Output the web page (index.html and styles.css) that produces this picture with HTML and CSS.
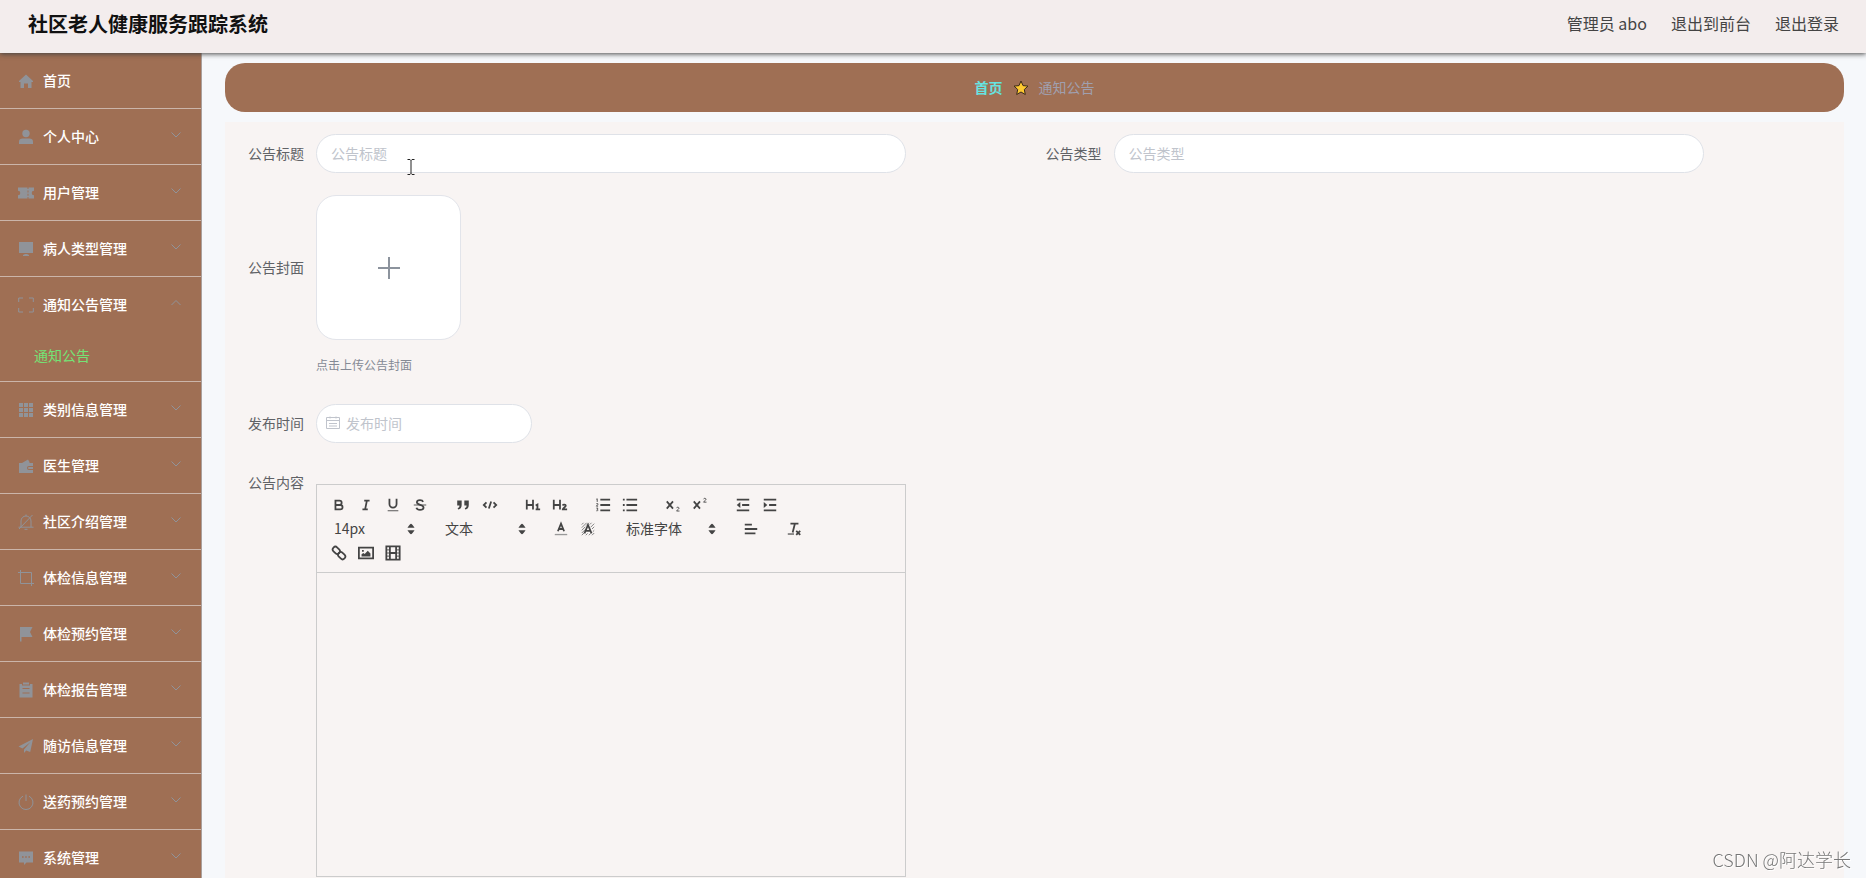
FILE: index.html
```html
<!DOCTYPE html>
<html lang="zh-CN">
<head>
  <meta charset="UTF-8">
  <meta name="viewport" content="width=device-width, initial-scale=1.0">
  <title>社区老人健康服务跟踪系统</title>
  <link rel="stylesheet" href="styles.css">
</head>
<body>
  <header class="navbar">
    <h1>社区老人健康服务跟踪系统</h1>
    <nav class="user-menu">
      <span>管理员 abo</span>
      <a href="#">退出到前台</a>
      <a href="#">退出登录</a>
    </nav>
  </header>

  <div class="layout">
    <aside class="sidebar">
      <ul class="menu">
        <li><a href="#">
          <svg class="icon" viewBox="0 0 16 16"><path d="M8 1.5 1 8v1h1.5v6H6v-4.5h4V15h3.5V9H15V8z"/></svg>
          <span>首页</span></a></li>
        <li><a href="#">
          <svg class="icon" viewBox="0 0 16 16"><circle cx="8" cy="4.5" r="3.7"/><path d="M1 15v-2.5c0-2 1.5-3 3.5-3h7c2 0 3.5 1 3.5 3V15z"/></svg>
          <span>个人中心</span>
          <svg class="arrow" viewBox="0 0 12 12"><path d="M1.5 3.5 6 8l4.5-4.5"/></svg></a></li>
        <li><a href="#">
          <svg class="icon" viewBox="0 0 16 16"><path d="M0 2.5h9.5V4h1V2.5H16v3.2a2.3 2.3 0 0 0 0 4.6v3.2h-5.5V12h-1v1.5H0v-3.2a2.3 2.3 0 0 0 0-4.6zM9.5 5.5v2h1v-2zm0 3.2v2h1v-2z" fill-rule="evenodd"/></svg>
          <span>用户管理</span>
          <svg class="arrow" viewBox="0 0 12 12"><path d="M1.5 3.5 6 8l4.5-4.5"/></svg></a></li>
        <li><a href="#">
          <svg class="icon" viewBox="0 0 16 16"><path d="M1 1h14v11H1zM5 14l2-1h2l2 1v1H5z"/></svg>
          <span>病人类型管理</span>
          <svg class="arrow" viewBox="0 0 12 12"><path d="M1.5 3.5 6 8l4.5-4.5"/></svg></a></li>
        <li class="open"><a href="#">
          <svg class="icon line" viewBox="0 0 16 16"><path d="M.7 5V1H5M11 1h4.300v4M15.300 11v4H11M5 15H.7v-4"/></svg>
          <span>通知公告管理</span>
          <svg class="arrow" viewBox="0 0 12 12"><path d="M1.5 8 6 3.5 10.5 8"/></svg></a>
          <ul class="submenu">
            <li><a href="#">通知公告</a></li>
          </ul>
        </li>
        <li><a href="#">
          <svg class="icon" viewBox="0 0 16 16"><path d="M1 1h4v4H1zM6 1h4v4H6zM11 1h4v4h-4zM1 6h4v4H1zM6 6h4v4H6zM11 6h4v4h-4zM1 11h4v4H1zM6 11h4v4H6zM11 11h4v4h-4z"/></svg>
          <span>类别信息管理</span>
          <svg class="arrow" viewBox="0 0 12 12"><path d="M1.5 3.5 6 8l4.5-4.5"/></svg></a></li>
        <li><a href="#">
          <svg class="icon" viewBox="0 0 16 16"><path d="M1 5h3l6-3.5L11.5 4V5H15v3h-4a2 2 0 0 0 0 4h4v3H1zM11 9h4v2h-4a1 1 0 0 1 0-2z"/></svg>
          <span>医生管理</span>
          <svg class="arrow" viewBox="0 0 12 12"><path d="M1.5 3.5 6 8l4.5-4.5"/></svg></a></li>
        <li><a href="#">
          <svg class="icon line" viewBox="0 0 16 16"><path d="M3 13V7a5 5 0 0 1 10 0v6M.5 13.200h15M8 2V.5M6.500 15.300h3M1 15 14.500 1"/></svg>
          <span>社区介绍管理</span>
          <svg class="arrow" viewBox="0 0 12 12"><path d="M1.5 3.5 6 8l4.5-4.5"/></svg></a></li>
        <li><a href="#">
          <svg class="icon line" viewBox="0 0 16 16"><path d="M2.500 0v13.500H16M0 2.500h13.500V16"/></svg>
          <span>体检信息管理</span>
          <svg class="arrow" viewBox="0 0 12 12"><path d="M1.5 3.5 6 8l4.5-4.5"/></svg></a></li>
        <li><a href="#">
          <svg class="icon" viewBox="0 0 16 16"><path d="M2 1h12.500L12 6l2.500 5h-11v4.500H2z"/></svg>
          <span>体检预约管理</span>
          <svg class="arrow" viewBox="0 0 12 12"><path d="M1.5 3.5 6 8l4.5-4.5"/></svg></a></li>
        <li><a href="#">
          <svg class="icon" viewBox="0 0 16 16"><path fill-rule="evenodd" d="M1.500 2H4v1.500h8V2h2.500v13.500h-13zM4.500 6v1h7V6zm0 4.500v1h7v-1zM5 .5h6v2H5z"/></svg>
          <span>体检报告管理</span>
          <svg class="arrow" viewBox="0 0 12 12"><path d="M1.5 3.5 6 8l4.5-4.5"/></svg></a></li>
        <li><a href="#">
          <svg class="icon" viewBox="0 0 16 16"><path d="M15 1 .5 8.500l4 2L12.500 4 6 11.500V15l2.200-2.500 4 1.500z"/></svg>
          <span>随访信息管理</span>
          <svg class="arrow" viewBox="0 0 12 12"><path d="M1.5 3.5 6 8l4.5-4.5"/></svg></a></li>
        <li><a href="#">
          <svg class="icon line" viewBox="0 0 16 16"><path d="M8 .5V7M5 2.200a7 7 0 1 0 6 0"/></svg>
          <span>送药预约管理</span>
          <svg class="arrow" viewBox="0 0 12 12"><path d="M1.5 3.5 6 8l4.5-4.5"/></svg></a></li>
        <li><a href="#">
          <svg class="icon" viewBox="0 0 16 16"><path fill-rule="evenodd" d="M1 1.500h14v11H8.500L6 15v-2.500H1zM4 6.200v1.600h1.600V6.200zm3.200 0v1.600h1.600V6.200zm3.200 0v1.600H12V6.200z"/></svg>
          <span>系统管理</span>
          <svg class="arrow" viewBox="0 0 12 12"><path d="M1.5 3.5 6 8l4.5-4.5"/></svg></a></li>
      </ul>
    </aside>

    <main class="main">
      <nav class="breadcrumb">
        <a href="#">首页</a>
        <svg class="star" viewBox="0 0 16 16"><path d="m8 1 2 4.600 5 .5-3.700 3.400 1 5L8 12l-4.300 2.500 1-5L1 6.100l5-.5z"/></svg>
        <span>通知公告</span>
      </nav>

      <form class="panel">
        <div class="row">
          <div class="field">
            <label for="title">公告标题</label>
            <input type="text" id="title" placeholder="公告标题">
          </div>
          <div class="field">
            <label for="type">公告类型</label>
            <input type="text" id="type" placeholder="公告类型">
          </div>
        </div>

        <div class="field cover">
          <label for="cover">公告封面</label>
          <button type="button" id="cover" class="upload" aria-label="上传公告封面">
            <svg viewBox="0 0 24 24"><path d="M12 1v22M1 12h22"/></svg>
          </button>
        </div>
        <p class="tip">点击上传公告封面</p>

        <div class="field">
          <label for="date">发布时间</label>
          <div class="date">
            <svg viewBox="0 0 14 14"><path d="M.5 1.500h13v11H.5zM.5 4.500h13M4 .5v2M10 .5v2M3 7.500h8M3 10h8"/></svg>
            <input type="text" id="date" placeholder="发布时间">
          </div>
        </div>

        <div class="field content">
          <label for="content">公告内容</label>
          <div class="editor">
            <div class="toolbar">
              <span class="formats">
                <button type="button" aria-label="粗体"><svg viewBox="0 0 18 18"><path class="s" d="M5 4h4.500a2.500 2.500 0 0 1 0 5H5zM5 9h5.500a2.500 2.500 0 0 1 0 5H5z"/></svg></button>
                <button type="button" aria-label="斜体"><svg viewBox="0 0 18 18"><path class="s" d="M7 4h6M5 14h6M8 14l2-10"/></svg></button>
                <button type="button" aria-label="下划线"><svg viewBox="0 0 18 18"><path class="s" d="M5 2v6a4 4 0 0 0 8 0V2"/><path class="f" d="M3 15h12v1H3z"/></svg></button>
                <button type="button" aria-label="删除线"><svg viewBox="0 0 18 18"><path class="s" d="M12.500 5.500C12 4 10.500 3.500 9 3.500c-2 0-3.500 1-3.500 2.500C5.500 9.500 13 8 13 11.800c0 1.700-1.700 2.700-4 2.700-2 0-3.500-.8-4-2.500"/><path class="f" d="M2 8.500h14v1H2z"/></svg></button>
              </span>
              <span class="formats">
                <button type="button" aria-label="引用"><svg viewBox="0 0 18 18"><path class="f" d="M2.500 4h5v5c0 3-1.500 5-4 5l-.5-1.500c1.500-.5 2-1.300 2-3H2.500zM10.500 4h5v5c0 3-1.500 5-4 5l-.5-1.500c1.500-.5 2-1.300 2-3h-2.500z"/></svg></button>
                <button type="button" aria-label="代码"><svg viewBox="0 0 18 18"><path class="s" d="M5 6 2 9l3 3M13 6l3 3-3 3M10.300 5 7.700 13"/></svg></button>
              </span>
              <span class="formats">
                <button type="button" aria-label="标题1"><svg viewBox="0 0 18 18"><path class="s" d="M2 3v11M9 3v11M2 9h7M12 9.500l2-1V14M12 14h5"/></svg></button>
                <button type="button" aria-label="标题2"><svg viewBox="0 0 18 18"><path class="s" d="M2 3v11M9 3v11M2 9h7"/><path class="s" d="M12 9.500c.5-1.300 3.500-1.300 3.500.3 0 1.200-3 2.200-3.300 4H17"/></svg></button>
              </span>
              <span class="formats">
                <button type="button" aria-label="有序列表"><svg viewBox="0 0 18 18"><path class="s" d="M6 3h11M6 9h11M6 15h11"/><path class="t" d="M1.500 2.500l1-.5v3.500M1.500 7.500h1.700v1L1.500 10.300h2M1.500 12.500h1.700L2.500 14c1.500 0 1 2-1 1.500"/></svg></button>
                <button type="button" aria-label="无序列表"><svg viewBox="0 0 18 18"><path class="s" d="M5 3h12M5 9h12M5 15h12M1 3h2M1 9h2M1 15h2"/></svg></button>
              </span>
              <span class="formats">
                <button type="button" aria-label="下标"><svg viewBox="0 0 18 18"><path class="s" d="m2 5 7 8M9 5l-7 8"/><path class="t" d="M13 12.500c.3-1.500 3-1.300 2.700.3-.2 1-2.200 1.700-2.700 3h3.300"/></svg></button>
                <button type="button" aria-label="上标"><svg viewBox="0 0 18 18"><path class="s" d="m2 5 7 8M9 5l-7 8"/><path class="t" d="M13 2.500c.3-1.500 3-1.300 2.700.3-.2 1-2.200 1.700-2.700 3h3.300"/></svg></button>
              </span>
              <span class="formats">
                <button type="button" aria-label="减少缩进"><svg viewBox="0 0 18 18"><path class="s" d="M2 3h14M8 9h8M2 15h14"/><path class="f" d="M6 5.500v7L2 9z"/></svg></button>
                <button type="button" aria-label="增加缩进"><svg viewBox="0 0 18 18"><path class="s" d="M2 3h14M8 9h8M2 15h14"/><path class="f" d="M2 5.500v7L6 9z"/></svg></button>
              </span>
              <span class="formats picker">
                <select aria-label="字号"><option>14px</option><option>16px</option></select>
                <svg viewBox="0 0 18 18"><path class="f" d="M9 3q1 0 4 4.500H5Q8 3 9 3zM9 15q1 0 4-4.500H5Q8 15 9 15z"/></svg>
              </span>
              <span class="formats picker">
                <select aria-label="段落"><option>文本</option><option>标题1</option></select>
                <svg viewBox="0 0 18 18"><path class="f" d="M9 3q1 0 4 4.500H5Q8 3 9 3zM9 15q1 0 4-4.500H5Q8 15 9 15z"/></svg>
              </span>
              <span class="formats">
                <button type="button" aria-label="文字颜色"><svg viewBox="0 0 18 18"><path class="s" d="M5.500 11.500 9 3l3.500 8.500M6.500 9h5"/><path class="f pale" d="M2 14.500h14V16H2z"/></svg></button>
                <button type="button" aria-label="背景颜色"><svg viewBox="0 0 18 18"><path class="hatch" d="M2 4l2-2M2 7.500 7.500 2M2 10.500l4-4M7 5l3-3M2 13.500l4-4M11 4l2-2M2 16l3-3M12 7l4-4M6.500 16l2-2M13.500 9 16 6.500M10 16l2-2M14.500 12l1.500-1.500M13.500 16l2.500-2.500"/><path class="s" d="M5 14 9 4.500 13 14M6.500 11h5"/></svg></button>
              </span>
              <span class="formats picker wide">
                <select aria-label="字体"><option>标准字体</option><option>宋体</option></select>
                <svg viewBox="0 0 18 18"><path class="f" d="M9 3q1 0 4 4.500H5Q8 3 9 3zM9 15q1 0 4-4.500H5Q8 15 9 15z"/></svg>
              </span>
              <span class="formats">
                <button type="button" aria-label="对齐"><svg viewBox="0 0 18 18"><path class="s" d="M2 4h8M2 9h14M2 14h12"/></svg></button>
              </span>
              <span class="formats">
                <button type="button" aria-label="清除格式"><svg viewBox="0 0 18 18"><path class="s" d="M5 3h9M10 3 7.500 13M11.500 11l4.500 4.500M16 11l-4.500 4.500"/><path class="f" d="M2 14h7v1.300H2z"/></svg></button>
              </span>
              <span class="formats">
                <button type="button" aria-label="链接"><svg viewBox="0 0 18 18"><rect class="s" x="1.500" y="3" width="9" height="6" rx="3" transform="rotate(45 6 6)"/><rect class="s" x="7.500" y="9" width="9" height="6" rx="3" transform="rotate(45 12 12)"/></svg></button>
                <button type="button" aria-label="图片"><svg viewBox="0 0 18 18"><path class="s" d="M1 3h16v12H1z"/><path class="f" d="M4 13v-2.500l2-1.500 1.500 1L11 6.500l3 3V13zM4.500 5.500h2v2h-2z"/></svg></button>
                <button type="button" aria-label="视频"><svg viewBox="0 0 18 18"><path class="s" d="M1.500 1.500h15v15h-15zM5.500 1.500v15M12.500 1.500v15M5.500 9h7"/><path class="t" d="M2 5.500h3M2 9h3M2 12.500h3M13 5.500h3M13 9h3M13 12.500h3"/></svg></button>
              </span>
            </div>
            <textarea id="content"></textarea>
          </div>
        </div>
      </form>
    </main>
  </div>

  <svg class="cursor" viewBox="0 0 8 16"><path d="M.5.5H3l1 1 1-1h2.500M4 1.500v13M.5 15.500H3l1-1 1 1h2.500"/></svg>
  <div class="watermark">CSDN @阿达学长</div>
</body>
</html>
```
FILE: styles.css
```css
* {
  box-sizing: border-box;
}
body {
  margin: 0;
  height: 100vh;
  overflow: hidden;
  display: flex;
  flex-direction: column;
  font-family: "Noto Sans CJK SC", sans-serif;
  font-size: 14px;
  color: #606266;
  background: #f6f8fb;
}
a {
  color: inherit;
  text-decoration: none;
}
ul {
  list-style: none;
  margin: 0;
  padding: 0;
}
button, input, select, textarea {
  font: inherit;
  color: inherit;
}

/* top bar */
.navbar {
  position: relative;
  z-index: 2;
  flex: none;
  display: flex;
  align-items: center;
  justify-content: space-between;
  height: 53px;
  padding: 0 27px 6px 28px;
  background: #f3eded;
  box-shadow: 0 1px 5px #444;
}
.navbar h1 {
  margin: 0;
  font-size: 20px;
  line-height: 28px;
  color: #111;
}
.user-menu {
  display: flex;
  gap: 24px;
  padding-bottom: 2px;
  font-size: 16px;
  color: #444;
}

.layout {
  flex: 1;
  display: flex;
  min-height: 0;
}

/* sidebar */
.sidebar {
  flex: none;
  width: 202px;
  overflow: hidden;
  background: #9f6f54;
  border-right: 1px solid #aaa09c;
}
.menu > li {
  border-bottom: 1px solid #cbb5aa;
}
.menu > li > a {
  display: flex;
  align-items: center;
  height: 55px;
  padding: 0 19px 0 18px;
  color: #fff;
  font-weight: 500;
}
.menu span, .breadcrumb a, .breadcrumb span {
  padding-bottom: 2px;
}
.icon {
  width: 16px;
  height: 16px;
  margin-right: 9px;
  fill: #909399;
}
.line {
  fill: none;
  stroke: #909399;
}
.arrow {
  width: 12px;
  height: 12px;
  margin: 0 0 4px auto;
  fill: none;
  stroke: #909399;
}
.submenu a {
  display: block;
  padding: 0 0 2px 34px;
  line-height: 47px;
  color: #75e275;
}

/* content */
.main {
  flex: 1;
  display: flex;
  flex-direction: column;
  gap: 10px;
  padding: 10px 22px 0 23px;
  min-width: 0;
}
.breadcrumb {
  flex: none;
  display: flex;
  align-items: center;
  justify-content: center;
  gap: 10px;
  height: 49px;
  border-radius: 20px;
  background: #9f6f54;
  color: #a09fae;
}
.breadcrumb a {
  color: #66e3e0;
  font-weight: 700;
}
.star {
  width: 16px;
  height: 16px;
  fill: #fdc830;
  stroke: #3a2a1c;
  stroke-linejoin: round;
}
.panel {
  flex: 1;
  padding: 12px 13px 0 11px;
  background: #f8f4f3;
}
.row {
  display: grid;
  grid-template-columns: 1fr 1fr;
}
.field {
  display: flex;
  align-items: center;
}
.field label {
  flex: none;
  width: 80px;
  padding: 0 12px 2px 0;
  text-align: right;
}
.field input {
  width: 74%;
  height: 39px;
  padding: 0 14px 2px;
  border: 1px solid #dfe2e8;
  border-radius: 20px;
  background: #fff;
  outline: none;
}
.field input::placeholder {
  color: #c0c4cc;
}
.cover {
  margin-top: 22px;
}
.upload {
  display: flex;
  align-items: center;
  justify-content: center;
  width: 145px;
  height: 145px;
  border: 1px solid #e2e4ea;
  border-radius: 20px;
  background: #fff;
}
.upload svg {
  width: 24px;
  fill: none;
  stroke: #8c939d;
  stroke-width: 2;
}
.tip {
  margin: 15px 0 29px 80px;
  font-size: 12px;
  line-height: 20px;
  color: #858a95;
}
.date {
  position: relative;
}
.date svg {
  position: absolute;
  left: 10px;
  top: 12px;
  width: 14px;
  fill: none;
  stroke: #c0c4cc;
}
.field .date input {
  width: 216px;
  padding-left: 29px;
}

/* rich text editor */
.content {
  width: 50%;
  margin-top: 41px;
  align-items: flex-start;
}
.content label {
  margin-top: -12px;
  line-height: 20px;
}
.editor {
  width: 74%;
  border: 1px solid #ccc;
}
.toolbar {
  display: flex;
  flex-wrap: wrap;
  padding: 8px 0 7px 8px;
  border-bottom: 1px solid #ccc;
}
.formats {
  display: flex;
  height: 24px;
  margin-right: 16px;
}
.formats button {
  display: flex;
  align-items: center;
  justify-content: center;
  width: 27px;
  padding: 0;
  border: 0;
  background: none;
}
.formats svg {
  width: 16px;
  height: 16px;
}
.s, .t, .hatch {
  fill: none;
  stroke: #444;
  stroke-width: 2;
}
.t {
  stroke-width: 1;
}
.hatch {
  stroke: #777;
  stroke-width: 1;
}
.f {
  fill: #444;
}
.pale {
  fill: #999;
}
.picker {
  position: relative;
  width: 95px;
}
.wide {
  width: 104px;
}
.picker select {
  appearance: none;
  width: 100%;
  padding: 0 0 2px 9px;
  border: 0;
  background: none;
  color: #444;
}
.picker svg {
  position: absolute;
  right: 1px;
  top: 4px;
  pointer-events: none;
}
.editor textarea {
  display: block;
  width: 100%;
  height: 303px;
  padding: 12px 15px;
  border: 0;
  background: none;
  resize: none;
  outline: none;
}

.cursor {
  position: absolute;
  left: 407px;
  top: 159px;
  width: 8px;
  height: 16px;
  fill: none;
  stroke: #222;
}
.watermark {
  position: fixed;
  right: 15px;
  bottom: 6px;
  font-size: 18px;
  font-weight: 300;
  color: #777;
  text-shadow: 1px 1px 0 #fff;
}
```
